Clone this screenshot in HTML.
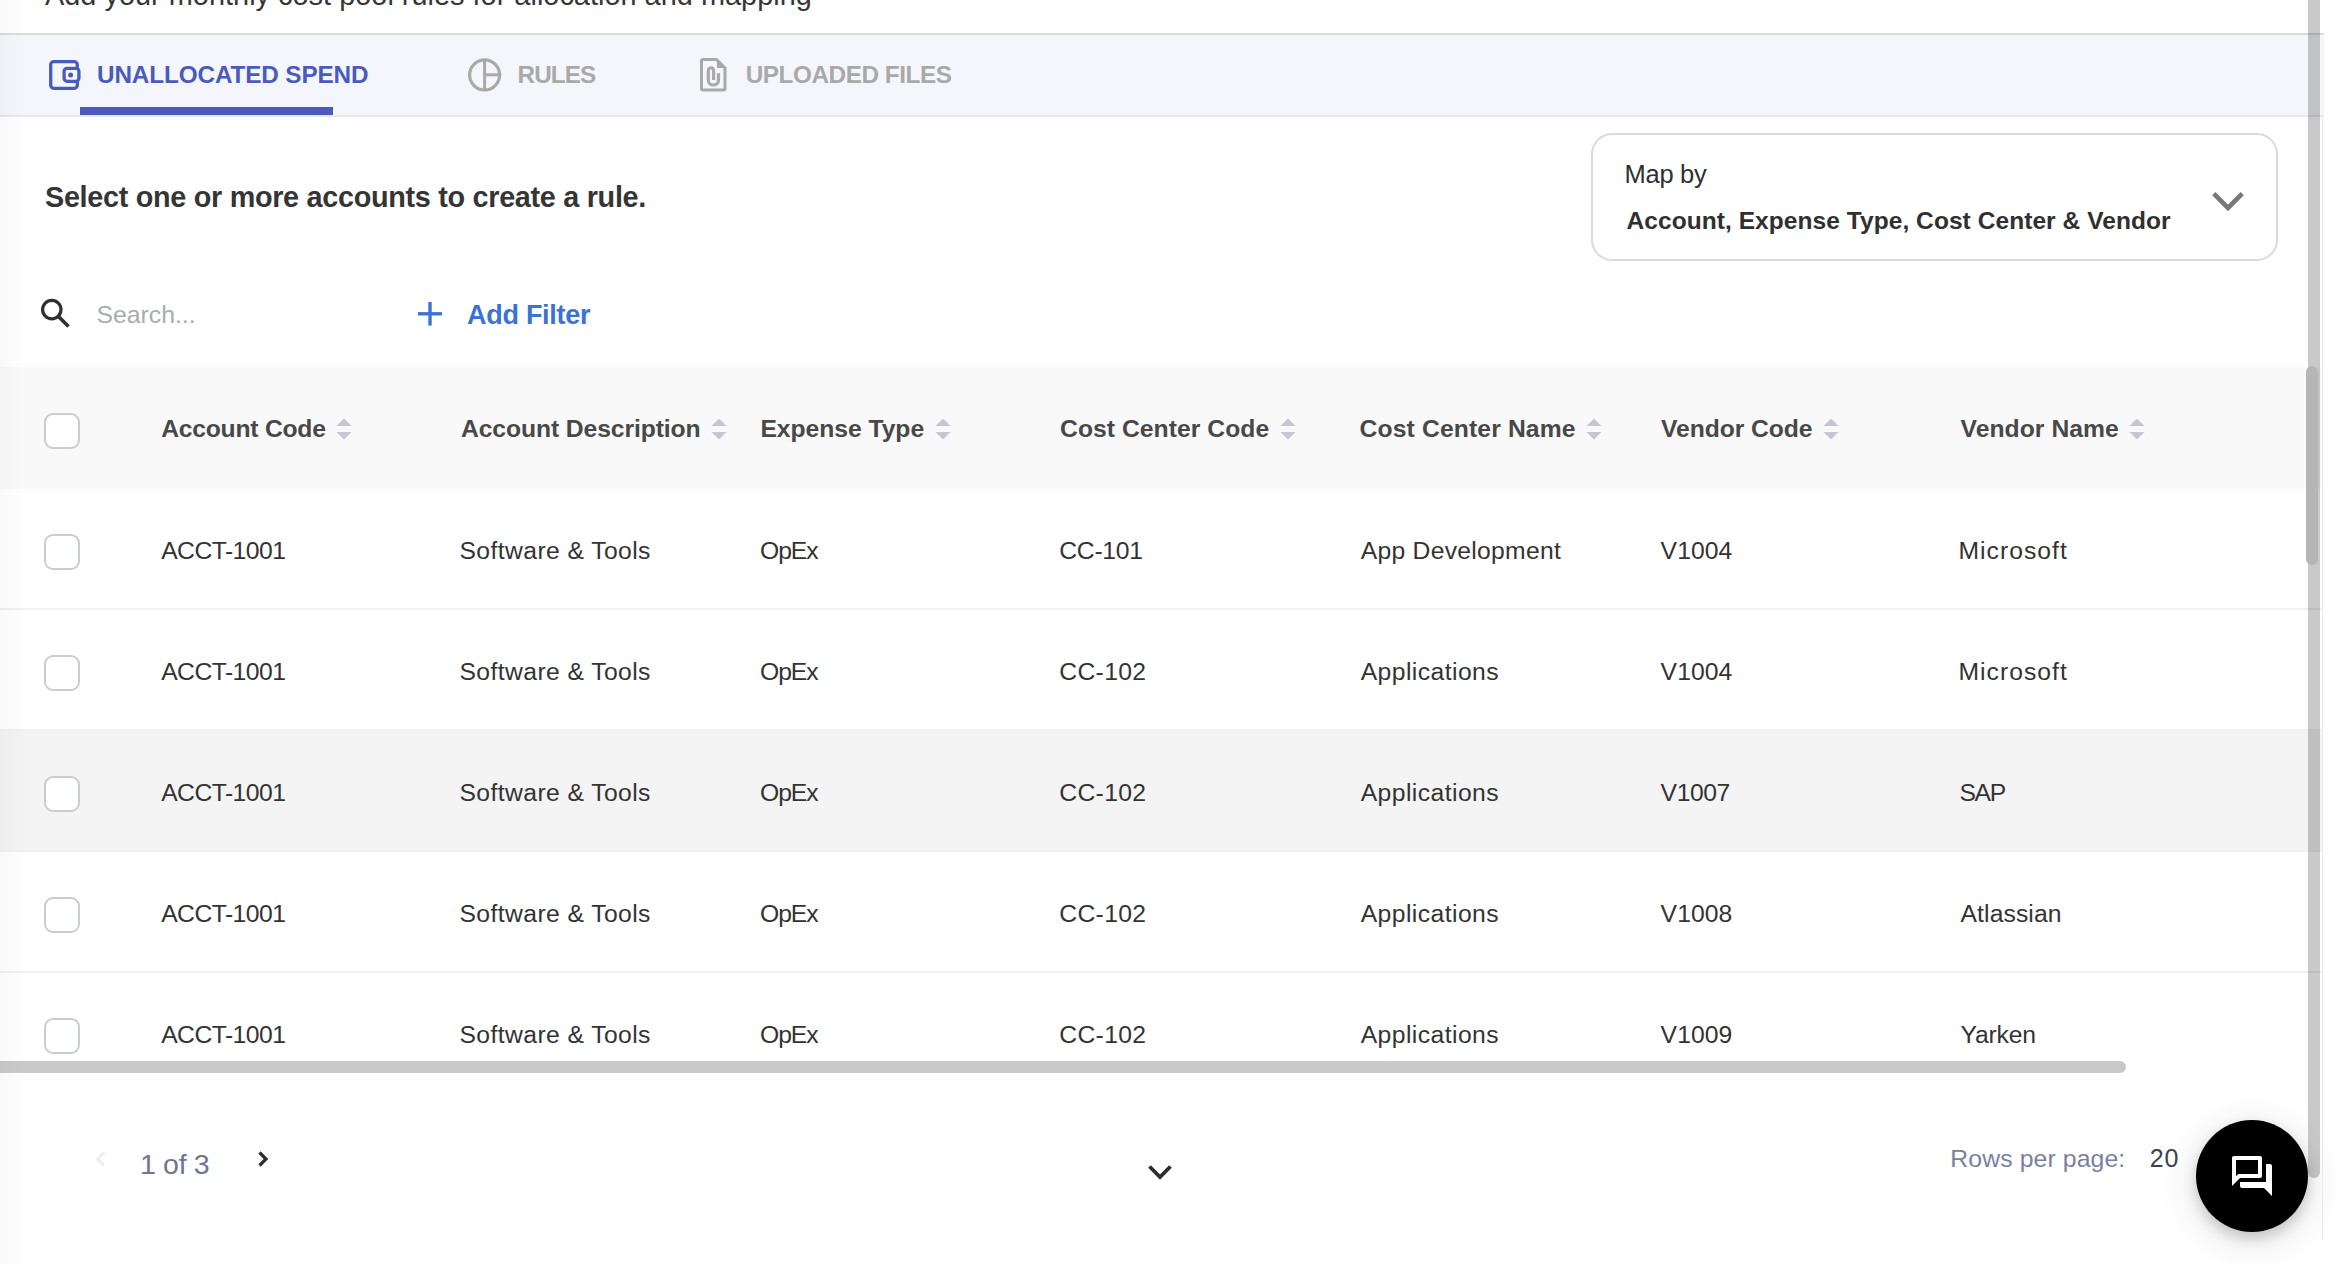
<!DOCTYPE html>
<html><head><meta charset="utf-8"><style>
*{margin:0;padding:0;box-sizing:border-box}
html,body{width:2340px;height:1264px;overflow:hidden;background:#fff;font-family:"Liberation Sans",sans-serif}
.t{position:absolute;white-space:nowrap}
.a{position:absolute}
.cb{position:absolute;width:36px;height:36px;border:2px solid #c9ccd1;border-radius:9px;background:#fff}
.sort{position:absolute;width:16px;height:22px}
</style></head><body>
<div class="t" style="left:45.00px;top:-21.7px;font-size:28.9px;line-height:35px;color:#363636;letter-spacing:0.013px;">Add your monthly cost pool rules for allocation and mapping</div>
<div class="a" style="left:0;top:33px;width:2324px;height:2px;background:#dcdcdc"></div>
<div class="a" style="left:0;top:35px;width:2324px;height:80px;background:#f5f6fb"></div>
<div class="a" style="left:0;top:115px;width:2324px;height:2px;background:#e7e8ed"></div>
<div class="a" style="left:80px;top:107px;width:253px;height:8px;background:#4a5bbd"></div>
<svg class="a" style="left:44px;top:55px" width="44" height="40" viewBox="44 55 44 40">
<rect x="50.7" y="61.7" width="26.6" height="26.6" rx="3" fill="none" stroke="#4a5bbd" stroke-width="3.3"/>
<rect x="64.1" y="68.3" width="14.8" height="13" rx="3" fill="#f5f6fb" stroke="#4a5bbd" stroke-width="3.3"/>
<circle cx="70.6" cy="74.9" r="2.5" fill="#4a5bbd"/>
</svg>
<div class="t" style="left:97.00px;top:60.0px;font-size:24.3px;line-height:29px;color:#4a5bbd;font-weight:bold;letter-spacing:-0.126px;">UNALLOCATED SPEND</div>
<svg class="a" style="left:460px;top:50px" width="50" height="50" viewBox="460 50 50 50">
<circle cx="484.6" cy="74.9" r="15" fill="none" stroke="#a9a9a9" stroke-width="3.2"/>
<line x1="484.6" y1="60" x2="484.6" y2="90" stroke="#a9a9a9" stroke-width="3"/>
<line x1="484.6" y1="74.8" x2="500" y2="74.8" stroke="#a9a9a9" stroke-width="3"/>
</svg>
<div class="t" style="left:517.50px;top:60.0px;font-size:24.3px;line-height:29px;color:#a9a9a9;font-weight:bold;letter-spacing:-0.910px;">RULES</div>
<svg class="a" style="left:695px;top:52px" width="40" height="46" viewBox="695 52 40 46">
<path d="M716.5 59.6 H703 a1.5 1.5 0 0 0 -1.5 1.5 V88.5 a1.5 1.5 0 0 0 1.5 1.5 H723.5 a1.5 1.5 0 0 0 1.5 -1.5 V68 Z" fill="none" stroke="#a9a9a9" stroke-width="3" stroke-linejoin="round"/>
<path d="M717 58.5 L726.5 68 H717 Z" fill="#a9a9a9"/>
<path d="M713.6 80 V70.5 a2.65 2.65 0 0 0 -5.3 0 V79.9 a5.1 5.1 0 0 0 10.2 0 V73.3" fill="none" stroke="#a9a9a9" stroke-width="3.2"/>
</svg>
<div class="t" style="left:745.70px;top:60.0px;font-size:24.3px;line-height:29px;color:#a9a9a9;font-weight:bold;letter-spacing:-0.441px;">UPLOADED FILES</div>
<div class="t" style="left:45.00px;top:179.5px;font-size:28.8px;line-height:35px;color:#353535;font-weight:bold;letter-spacing:-0.301px;">Select one or more accounts to create a rule.</div>
<div class="a" style="left:1591px;top:133px;width:687px;height:128px;border:2px solid #dadada;border-radius:21px"></div>
<div class="t" style="left:1624.50px;top:159.0px;font-size:25.5px;line-height:31px;color:#2f2f2f;letter-spacing:-0.274px;">Map by</div>
<div class="t" style="left:1626.50px;top:206.0px;font-size:24.5px;line-height:29px;color:#303030;font-weight:bold;letter-spacing:0.063px;">Account, Expense Type, Cost Center &amp; Vendor</div>
<svg class="a" style="left:2205px;top:185px" width="46" height="32" viewBox="2205 185 46 32">
<polyline points="2213.8,193.6 2228,207.9 2242.2,193.6" fill="none" stroke="#777" stroke-width="4.6"/>
</svg>
<svg class="a" style="left:35px;top:292px" width="42" height="42" viewBox="35 292 42 42">
<circle cx="51.8" cy="309.6" r="9.2" fill="none" stroke="#2f2f2f" stroke-width="3.2"/>
<line x1="58.5" y1="316.5" x2="68.5" y2="326.5" stroke="#2f2f2f" stroke-width="3.6"/>
</svg>
<div class="t" style="left:96.50px;top:299.5px;font-size:24.8px;line-height:30px;color:#a8acb1;letter-spacing:-0.018px;">Search...</div>
<svg class="a" style="left:410px;top:296px" width="40" height="36" viewBox="410 296 40 36">
<line x1="418" y1="313.8" x2="442" y2="313.8" stroke="#3b72d9" stroke-width="3.4"/>
<line x1="430" y1="302" x2="430" y2="325.6" stroke="#3b72d9" stroke-width="3.4"/>
</svg>
<div class="t" style="left:467.00px;top:299.0px;font-size:27px;line-height:32px;color:#3b72d9;font-weight:bold;letter-spacing:-0.276px;">Add Filter</div>
<div class="a" style="left:0;top:367px;width:2322px;height:122px;background:#f9f9f9"></div>
<div class="cb" style="left:44px;top:413px"></div>
<div class="t" style="left:161.20px;top:413.5px;font-size:24.7px;line-height:30px;color:#484848;font-weight:bold;letter-spacing:-0.236px;">Account Code</div>
<svg class="sort" style="left:336px;top:418px" viewBox="0 0 16 22"><path d="M8 0.5 L15.5 8 H0.5 Z M8 21.5 L15.5 14 H0.5 Z" fill="#c5c6d3"/></svg>
<div class="t" style="left:461.00px;top:413.5px;font-size:24.7px;line-height:30px;color:#484848;font-weight:bold;letter-spacing:-0.096px;">Account Description</div>
<svg class="sort" style="left:711px;top:418px" viewBox="0 0 16 22"><path d="M8 0.5 L15.5 8 H0.5 Z M8 21.5 L15.5 14 H0.5 Z" fill="#c5c6d3"/></svg>
<div class="t" style="left:760.40px;top:413.5px;font-size:24.7px;line-height:30px;color:#484848;font-weight:bold;letter-spacing:-0.042px;">Expense Type</div>
<svg class="sort" style="left:935px;top:418px" viewBox="0 0 16 22"><path d="M8 0.5 L15.5 8 H0.5 Z M8 21.5 L15.5 14 H0.5 Z" fill="#c5c6d3"/></svg>
<div class="t" style="left:1060.00px;top:413.5px;font-size:24.7px;line-height:30px;color:#484848;font-weight:bold;letter-spacing:0.049px;">Cost Center Code</div>
<svg class="sort" style="left:1280px;top:418px" viewBox="0 0 16 22"><path d="M8 0.5 L15.5 8 H0.5 Z M8 21.5 L15.5 14 H0.5 Z" fill="#c5c6d3"/></svg>
<div class="t" style="left:1359.60px;top:413.5px;font-size:24.7px;line-height:30px;color:#484848;font-weight:bold;letter-spacing:0.128px;">Cost Center Name</div>
<svg class="sort" style="left:1586px;top:418px" viewBox="0 0 16 22"><path d="M8 0.5 L15.5 8 H0.5 Z M8 21.5 L15.5 14 H0.5 Z" fill="#c5c6d3"/></svg>
<div class="t" style="left:1661.00px;top:413.5px;font-size:24.7px;line-height:30px;color:#484848;font-weight:bold;letter-spacing:-0.073px;">Vendor Code</div>
<svg class="sort" style="left:1823px;top:418px" viewBox="0 0 16 22"><path d="M8 0.5 L15.5 8 H0.5 Z M8 21.5 L15.5 14 H0.5 Z" fill="#c5c6d3"/></svg>
<div class="t" style="left:1960.60px;top:413.5px;font-size:24.7px;line-height:30px;color:#484848;font-weight:bold;letter-spacing:0.035px;">Vendor Name</div>
<svg class="sort" style="left:2129px;top:418px" viewBox="0 0 16 22"><path d="M8 0.5 L15.5 8 H0.5 Z M8 21.5 L15.5 14 H0.5 Z" fill="#c5c6d3"/></svg>
<div class="a" style="left:0;top:367px;width:2322px;height:706px;overflow:hidden">
<div class="a" style="left:0;top:122px;width:2322px;height:121px;background:#fff;border-bottom:2px solid #eef0f4"></div>
<div class="a" style="left:0;top:243px;width:2322px;height:121px;background:#fff;border-bottom:2px solid #eef0f4"></div>
<div class="a" style="left:0;top:364px;width:2322px;height:121px;background:#f4f4f4;border-bottom:2px solid #eef0f4"></div>
<div class="a" style="left:0;top:485px;width:2322px;height:121px;background:#fff;border-bottom:2px solid #eef0f4"></div>
<div class="a" style="left:0;top:606px;width:2322px;height:121px;background:#fff;border-bottom:2px solid #eef0f4"></div>
</div>
<div class="cb" style="left:44px;top:534px"></div>
<div class="t" style="left:161.20px;top:535.7px;font-size:24.7px;line-height:30px;color:#333333;letter-spacing:-0.531px;">ACCT-1001</div>
<div class="t" style="left:459.50px;top:535.7px;font-size:24.7px;line-height:30px;color:#333333;letter-spacing:0.407px;">Software &amp; Tools</div>
<div class="t" style="left:760.00px;top:535.7px;font-size:24.7px;line-height:30px;color:#333333;letter-spacing:-1.033px;">OpEx</div>
<div class="t" style="left:1059.30px;top:535.7px;font-size:24.7px;line-height:30px;color:#333333;letter-spacing:-0.268px;">CC-101</div>
<div class="t" style="left:1360.70px;top:535.7px;font-size:24.7px;line-height:30px;color:#333333;letter-spacing:0.279px;">App Development</div>
<div class="t" style="left:1660.60px;top:535.7px;font-size:24.7px;line-height:30px;color:#333333;letter-spacing:0.086px;">V1004</div>
<div class="t" style="left:1958.50px;top:535.7px;font-size:24.7px;line-height:30px;color:#333333;letter-spacing:1.028px;">Microsoft</div>
<div class="cb" style="left:44px;top:655px"></div>
<div class="t" style="left:161.20px;top:656.7px;font-size:24.7px;line-height:30px;color:#333333;letter-spacing:-0.531px;">ACCT-1001</div>
<div class="t" style="left:459.50px;top:656.7px;font-size:24.7px;line-height:30px;color:#333333;letter-spacing:0.407px;">Software &amp; Tools</div>
<div class="t" style="left:760.00px;top:656.7px;font-size:24.7px;line-height:30px;color:#333333;letter-spacing:-1.033px;">OpEx</div>
<div class="t" style="left:1059.30px;top:656.7px;font-size:24.7px;line-height:30px;color:#333333;letter-spacing:0.332px;">CC-102</div>
<div class="t" style="left:1360.70px;top:656.7px;font-size:24.7px;line-height:30px;color:#333333;letter-spacing:0.439px;">Applications</div>
<div class="t" style="left:1660.60px;top:656.7px;font-size:24.7px;line-height:30px;color:#333333;letter-spacing:0.086px;">V1004</div>
<div class="t" style="left:1958.50px;top:656.7px;font-size:24.7px;line-height:30px;color:#333333;letter-spacing:1.028px;">Microsoft</div>
<div class="cb" style="left:44px;top:776px"></div>
<div class="t" style="left:161.20px;top:777.7px;font-size:24.7px;line-height:30px;color:#333333;letter-spacing:-0.531px;">ACCT-1001</div>
<div class="t" style="left:459.50px;top:777.7px;font-size:24.7px;line-height:30px;color:#333333;letter-spacing:0.407px;">Software &amp; Tools</div>
<div class="t" style="left:760.00px;top:777.7px;font-size:24.7px;line-height:30px;color:#333333;letter-spacing:-1.033px;">OpEx</div>
<div class="t" style="left:1059.30px;top:777.7px;font-size:24.7px;line-height:30px;color:#333333;letter-spacing:0.332px;">CC-102</div>
<div class="t" style="left:1360.70px;top:777.7px;font-size:24.7px;line-height:30px;color:#333333;letter-spacing:0.439px;">Applications</div>
<div class="t" style="left:1660.60px;top:777.7px;font-size:24.7px;line-height:30px;color:#333333;letter-spacing:-0.414px;">V1007</div>
<div class="t" style="left:1959.50px;top:777.7px;font-size:24.7px;line-height:30px;color:#333333;letter-spacing:-1.366px;">SAP</div>
<div class="cb" style="left:44px;top:897px"></div>
<div class="t" style="left:161.20px;top:898.7px;font-size:24.7px;line-height:30px;color:#333333;letter-spacing:-0.531px;">ACCT-1001</div>
<div class="t" style="left:459.50px;top:898.7px;font-size:24.7px;line-height:30px;color:#333333;letter-spacing:0.407px;">Software &amp; Tools</div>
<div class="t" style="left:760.00px;top:898.7px;font-size:24.7px;line-height:30px;color:#333333;letter-spacing:-1.033px;">OpEx</div>
<div class="t" style="left:1059.30px;top:898.7px;font-size:24.7px;line-height:30px;color:#333333;letter-spacing:0.332px;">CC-102</div>
<div class="t" style="left:1360.70px;top:898.7px;font-size:24.7px;line-height:30px;color:#333333;letter-spacing:0.439px;">Applications</div>
<div class="t" style="left:1660.60px;top:898.7px;font-size:24.7px;line-height:30px;color:#333333;letter-spacing:0.086px;">V1008</div>
<div class="t" style="left:1960.50px;top:898.7px;font-size:24.7px;line-height:30px;color:#333333;letter-spacing:0.107px;">Atlassian</div>
<div class="cb" style="left:44px;top:1018px"></div>
<div class="t" style="left:161.20px;top:1019.7px;font-size:24.7px;line-height:30px;color:#333333;letter-spacing:-0.531px;">ACCT-1001</div>
<div class="t" style="left:459.50px;top:1019.7px;font-size:24.7px;line-height:30px;color:#333333;letter-spacing:0.407px;">Software &amp; Tools</div>
<div class="t" style="left:760.00px;top:1019.7px;font-size:24.7px;line-height:30px;color:#333333;letter-spacing:-1.033px;">OpEx</div>
<div class="t" style="left:1059.30px;top:1019.7px;font-size:24.7px;line-height:30px;color:#333333;letter-spacing:0.332px;">CC-102</div>
<div class="t" style="left:1360.70px;top:1019.7px;font-size:24.7px;line-height:30px;color:#333333;letter-spacing:0.439px;">Applications</div>
<div class="t" style="left:1660.60px;top:1019.7px;font-size:24.7px;line-height:30px;color:#333333;letter-spacing:0.086px;">V1009</div>
<div class="t" style="left:1960.50px;top:1019.7px;font-size:24.7px;line-height:30px;color:#333333;letter-spacing:-0.192px;">Yarken</div>
<div class="a" style="left:0;top:1073px;width:2322px;height:191px;background:#fff"></div>
<div class="a" style="left:0;top:1061px;width:2126px;height:12px;background:#c9c9c9;border-radius:0 6px 6px 0"></div>
<svg class="a" style="left:90px;top:1146px" width="22" height="26" viewBox="90 1146 22 26">
<polyline points="104,1152.5 97.5,1159 104,1165.5" fill="none" stroke="#eceef3" stroke-width="3.2"/>
</svg>
<div class="t" style="left:140.00px;top:1147.0px;font-size:28.5px;line-height:34px;color:#6e7694;letter-spacing:-0.331px;">1 of 3</div>
<svg class="a" style="left:252px;top:1146px" width="22" height="26" viewBox="252 1146 22 26">
<polyline points="259.5,1152.5 266,1159 259.5,1165.5" fill="none" stroke="#2d2d2d" stroke-width="3.2"/>
</svg>
<svg class="a" style="left:1140px;top:1155px" width="40" height="32" viewBox="1140 1155 40 32">
<polyline points="1149.5,1166.5 1160,1177 1170.5,1166.5" fill="none" stroke="#2d2d2d" stroke-width="3.8"/>
</svg>
<div class="t" style="left:1950.30px;top:1143.5px;font-size:24.8px;line-height:30px;color:#7a819e;letter-spacing:0.093px;">Rows per page:</div>
<div class="t" style="left:2149.70px;top:1143.0px;font-size:25px;line-height:30px;color:#3e4350;letter-spacing:0.796px;">20</div>
<div class="a" style="left:2196px;top:1120px;width:112px;height:112px;border-radius:50%;background:#000;box-shadow:0 6px 14px rgba(0,0,0,0.18),0 8px 44px rgba(0,0,0,0.12)"></div>
<svg class="a" style="left:2228px;top:1152px" width="48" height="48" viewBox="0 0 24 24">
<path fill="#fff" d="M15 4v7H5.17L4 12.17V4h11m1-2H3c-.55 0-1 .45-1 1v14l4-4h10c.55 0 1-.45 1-1V3c0-.55-.45-1-1-1zm5 4h-2v9H6v2c0 .55.45 1 1 1h11l4 4V7c0-.55-.45-1-1-1z"/>
</svg>
<div class="a" style="left:2322px;top:117px;width:1px;height:1122px;background:#ececec"></div>
<div class="a" style="left:2308px;top:-10px;width:12px;height:1188px;background:rgba(0,0,0,0.21);border-radius:6px"></div>
<div class="a" style="left:2306px;top:366px;width:12px;height:199px;background:#b5b5b5;border-radius:6px"></div>
<div class="a" style="left:0;top:0;width:26px;height:1264px;background:linear-gradient(to right,rgba(0,0,0,0.025),rgba(0,0,0,0))"></div>
</body></html>
